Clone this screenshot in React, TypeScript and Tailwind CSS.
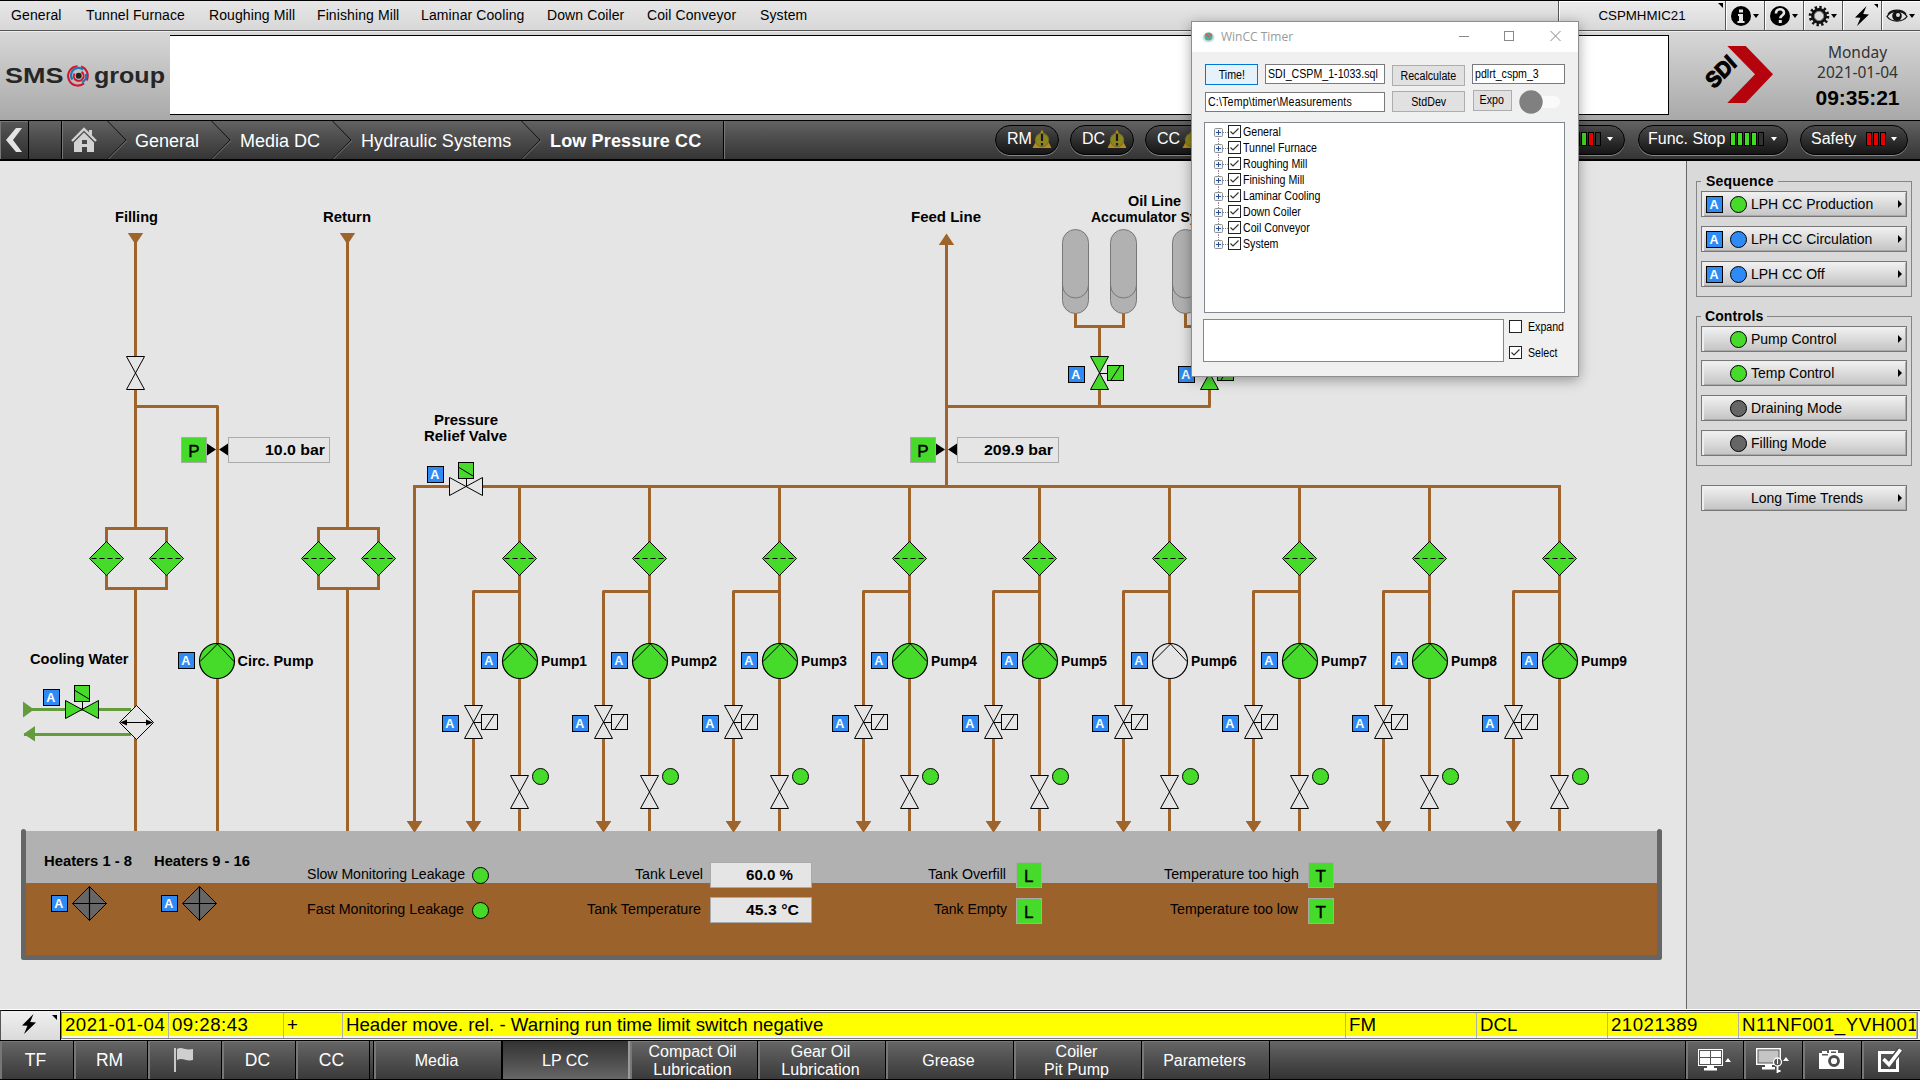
import React from "react";

const GREEN = "#46da2b";
const PIPE = "#9f642c";
const BG = "#e5e5e5";

/* ---------- process symbols ---------- */

type LabelProps = {
  x: number;
  y: number;
  w?: number;
  children: string;
  size?: number;
  bold?: boolean;
};

function Label({ x, y, w, children, size = 14, bold = true }: LabelProps) {
  return (
    <text x={x} y={y} fontSize={size} fontWeight={bold ? 700 : 400} textLength={w} lengthAdjust="spacingAndGlyphs" fill="#000">
      {children}
    </text>
  );
}

function Pipe({ d, color = PIPE }: { d: string; color?: string }) {
  return <path d={d} fill="none" stroke={color} strokeWidth={3} strokeLinejoin="round" />;
}

function AutoMark({ x, y }: { x: number; y: number }) {
  return (
    <g>
      <rect x={x + 0.5} y={y + 0.5} width={16} height={16} fill="#2e8bf5" stroke="#000" />
      <text x={x + 7.8} y={y + 12.8} fontSize={12.5} fontWeight={700} fill="#fff" textAnchor="middle">
        A
      </text>
    </g>
  );
}

function Filter({ x, y }: { x: number; y: number }) {
  return (
    <g stroke="#000">
      <path d={`M${x} ${y - 17}L${x + 17} ${y}L${x} ${y + 17}L${x - 17} ${y}Z`} fill={GREEN} />
      <path d={`M${x - 15} ${y}H${x + 15}`} strokeDasharray="5 3" />
    </g>
  );
}

function Pump({ x, y, fill = GREEN }: { x: number; y: number; fill?: string }) {
  return (
    <g stroke="#000">
      <circle cx={x} cy={y} r={17.5} fill={fill} strokeWidth={1.2} />
      <path d={`M${x - 17} ${y + 0.5}L${x + 0.5} ${y - 17}L${x + 17} ${y + 0.5}`} fill="none" />
    </g>
  );
}

function ValveV({ x, y, fill = BG }: { x: number; y: number; fill?: string }) {
  return (
    <path
      d={`M${x - 9} ${y - 16.5}H${x + 9}L${x - 9} ${y + 16.5}H${x + 9}Z`}
      fill={fill}
      stroke="#000"
    />
  );
}

function SolenoidV({ x, y, fill = BG }: { x: number; y: number; fill?: string }) {
  return (
    <g stroke="#000">
      <ValveV x={x} y={y} fill={fill} />
      <path d={`M${x} ${y + 0.5}h8`} />
      <rect x={x + 8} y={y - 7.5} width={16} height={15} fill={fill} />
      <path d={`M${x + 11.5} ${y + 7}L${x + 20.5} ${y - 7}`} />
    </g>
  );
}

function SolenoidH({ x, y, fill = BG }: { x: number; y: number; fill?: string }) {
  return (
    <g stroke="#000">
      <path d={`M${x - 16.5} ${y - 9}V${y + 9}L${x + 16.5} ${y - 9}V${y + 9}Z`} fill={fill} />
      <path d={`M${x + 0.5} ${y - 8}V${y}`} />
      <rect x={x - 7.5} y={y - 24} width={15} height={16} fill={GREEN} />
      <path d={`M${x - 7} ${y - 19}L${x + 7} ${y - 10.5}`} />
    </g>
  );
}

function ArrowDown({ x, y }: { x: number; y: number }) {
  return <path d={`M${x - 7.7} ${y}h15.4L${x} ${y + 11.5}Z`} fill={PIPE} />;
}

function Sensor({ x, y, letter }: { x: number; y: number; letter: string }) {
  return (
    <g>
      <rect x={x + 0.5} y={y + 0.5} width={25} height={25} fill={GREEN} stroke="#aaa" />
      <text x={x + 12.8} y={y + 19.8} fontSize={17} textAnchor="middle" fill="#000" stroke="#000" strokeWidth={0.4}>
        {letter}
      </text>
    </g>
  );
}

function ValueBox({ x, y }: { x: number; y: number }) {
  return <rect x={x + 0.5} y={y + 0.5} width={101} height={25} fill={BG} stroke="#aaa" />;
}

function PressureGauge({ x, value, vx, vw }: { x: number; value: string; vx: number; vw: number }) {
  return (
    <g>
      <Sensor x={x - 36.5} y={437} letter="P" />
      <path d={`M${x - 10.5} 443.5l9 6l-9 6ZM${x + 10.5} 443.5l-9 6l9 6Z`} fill="#000" />
      <ValueBox x={x + 10.5} y={437} />
      <Label x={vx} y={455} w={vw}>{value}</Label>
    </g>
  );
}

function Accumulator({ x }: { x: number }) {
  return (
    <g stroke="#777" fill="#b1b1b1">
      <rect x={x - 13} y={229.5} width={26} height={84} rx={13} />
      <path d={`M${x - 13} 285a13 13 0 0 0 26 0`} fill="none" />
    </g>
  );
}

function Heater({ x, y }: { x: number; y: number }) {
  return (
    <g stroke="#000">
      <path d={`M${x} ${y - 17}L${x + 17} ${y}L${x} ${y + 17}L${x - 17} ${y}Z`} fill="#666" />
      <path d={`M${x - 17} ${y}h34M${x} ${y - 17}v34`} strokeWidth={1.2} />
    </g>
  );
}

function PumpLine({ n }: { n: number }) {
  const x = 519.5 + 130 * (n - 1);
  const r = x - 46;
  return (
    <g>
      <Pipe d={`M${x} 486.5V644M${x} 678V775M${x} 809V831`} />
      <Pipe d={`M${x} 591.5H${r}V705M${r} 739V824`} />
      <Filter x={x} y={558.5} />
      <Pump x={x + 0.5} y={661} fill={n === 6 ? BG : GREEN} />
      <AutoMark x={x - 38.5} y={652} />
      <Label x={x + 21.5} y={666} w={46}>{`Pump${n}`}</Label>
      <SolenoidV x={r} y={722} />
      <AutoMark x={r - 31.5} y={715} />
      <ValveV x={x} y={792} />
      <circle cx={x + 21} cy={776.5} r={8} fill={GREEN} stroke="#000" />
      <ArrowDown x={r} y={821} />
    </g>
  );
}

function FilterPair({ x }: { x: number }) {
  return (
    <g>
      <path
        d={`M${x - 29} 528.5H${x + 31}V588.5H${x - 29}Z`}
        fill="none"
        stroke={PIPE}
        strokeWidth={3}
      />
      <Filter x={x - 29} y={558.5} />
      <Filter x={x + 31} y={558.5} />
    </g>
  );
}

function Diagram() {
  return (
    <svg
      width={1686}
      height={848}
      viewBox="0 161 1686 848"
      className="block shrink-0 bg-[#e5e5e5] font-['Liberation_Sans',Arial,sans-serif]"
    >
      {/* filling line */}
      <Label x={115} y={222} w={43}>Filling</Label>
      <Pipe d="M135.5 240V356M135.5 389V528M135.5 588V831M135.5 406.5H217.5V644M217.5 678V831" />
      <ArrowDown x={135.5} y={233} />
      <ValveV x={135.5} y={373} />
      <FilterPair x={135.5} />
      <PressureGauge x={217.5} value="10.0 bar" vx={265} vw={60} />
      <Pump x={217} y={661} />
      <AutoMark x={178} y={652} />
      <Label x={237.5} y={666} w={76}>Circ. Pump</Label>

      {/* return line */}
      <Label x={323} y={222} w={48}>Return</Label>
      <Pipe d="M347.5 240V528M347.5 588V831" />
      <ArrowDown x={347.5} y={233} />
      <FilterPair x={347.5} />

      {/* cooling water */}
      <Label x={30} y={664} w={98.5}>Cooling Water</Label>
      <Pipe color="#649b3c" d="M24 709.5H131M24 734.5H131" />
      <path d="M23 701.5l11 8l-11 8ZM23.5 734l11.5-8v15.500Z" fill="#649b3c" />
      <SolenoidH x={82} y={709.5} fill={GREEN} />
      <AutoMark x={43} y={689} />
      <path d="M136.500 705.5l17 17l-17 17l-17-17Z" fill={BG} stroke="#000" />
      <path d="M122 722.5h29" stroke="#000" />
      <path d="M120 722.500l7-3v6ZM153 722.500l-7-3v6Z" fill="#000" />

      {/* pressure header */}
      <Label x={434} y={425} w={64}>Pressure</Label>
      <Label x={424} y={441} w={83}>Relief Valve</Label>
      <path d="M414.5 824V486.5H1559.5V500" fill="none" stroke={PIPE} strokeWidth={3} />
      <ArrowDown x={414.5} y={821} />
      <rect x={450} y={480} width={32} height={12} fill={BG} />
      <SolenoidH x={466} y={486.5} />
      <AutoMark x={427} y={466} />

      {[1, 2, 3, 4, 5, 6, 7, 8, 9].map((n) => (
        <PumpLine key={n} n={n} />
      ))}

      {/* feed line */}
      <Label x={911} y={222} w={70}>Feed Line</Label>
      <Pipe d="M946.5 240V486M946.5 406.5H1209.5V389M1099.5 389V406" />
      <path d="M938.800 245h15.400L946.500 233.500Z" fill={PIPE} />
      <PressureGauge x={946.5} value="209.9 bar" vx={984} vw={69} />

      {/* accumulators */}
      <Label x={1128} y={206} w={53}>Oil Line</Label>
      <Label x={1091} y={222}>Accumulator System</Label>
      <path
        d="M1075.5 313V326.500H1123.500V313M1185.500 313V326.500H1233.500V313M1099.500 326V356M1209.500 326V356"
        fill="none"
        stroke={PIPE}
        strokeWidth={3}
      />
      <Accumulator x={1075.5} />
      <Accumulator x={1123.5} />
      <Accumulator x={1185.5} />
      <Accumulator x={1233.5} />
      <SolenoidV x={1099.5} y={373} fill={GREEN} />
      <AutoMark x={1068} y={366} />
      <SolenoidV x={1209.5} y={373} fill={GREEN} />
      <AutoMark x={1178} y={366} />

      {/* tank */}
      <rect x={26} y={831} width={1631} height={52} fill="#b1b1b1" />
      <rect x={26} y={883} width={1631} height={73} fill="#9c622b" />
      <path d="M23.500 831.500V957.500H1659.500V831.500" fill="none" stroke="#666" strokeWidth={5} strokeLinecap="round" strokeLinejoin="round" />
      {[414.5, ...[0, 1, 2, 3, 4, 5, 6, 7, 8].map((i) => 473.5 + 130 * i)].map((x) => (
        <ArrowDown key={x} x={x} y={821} />
      ))}
      <Label x={44} y={866} w={88}>Heaters 1 - 8</Label>
      <Label x={154} y={866} w={96}>Heaters 9 - 16</Label>
      <AutoMark x={51} y={895} />
      <AutoMark x={161} y={895} />
      <Heater x={89.5} y={903.5} />
      <Heater x={199.5} y={903.5} />

      <Label bold={false} x={307} y={879} w={158}>Slow Monitoring Leakage</Label>
      <Label bold={false} x={307} y={914} w={157}>Fast Monitoring Leakage</Label>
      <circle cx={480.500} cy={875.500} r={8} fill={GREEN} stroke="#000" />
      <circle cx={480.500} cy={910.500} r={8} fill={GREEN} stroke="#000" />

      <Label bold={false} x={635} y={879} w={68}>Tank Level</Label>
      <Label bold={false} x={587} y={914} w={114}>Tank Temperature</Label>
      <ValueBox x={710} y={862} />
      <ValueBox x={710} y={897} />
      <Label x={746} y={880} w={47}>60.0 %</Label>
      <Label x={746} y={915} w={53}>45.3 °C</Label>

      <Label bold={false} x={928} y={879} w={78}>Tank Overfill</Label>
      <Label bold={false} x={934} y={914} w={73}>Tank Empty</Label>
      <Sensor x={1016} y={862} letter="L" />
      <Sensor x={1016} y={898} letter="L" />

      <Label bold={false} x={1164} y={879} w={135}>Temperature too high</Label>
      <Label bold={false} x={1170} y={914} w={128}>Temperature too low</Label>
      <Sensor x={1308} y={862} letter="T" />
      <Sensor x={1308} y={898} letter="T" />
    </svg>
  );
}

/* ---------- top bars ---------- */

function Bolt({ className }: { className?: string }) {
  return (
    <svg width="18" height="22" viewBox="0 0 18 22" className={className}>
      <path d="M13.500 1L2 12.500l5.500.3L4 21L16 9.500l-5.800-.6Z" fill="#000" />
    </svg>
  );
}

function Caret({ className }: { className?: string }) {
  return (
    <svg width="6" height="4" viewBox="0 0 6 4" className={className}>
      <path d="M0 0h6L3 4Z" fill="currentColor" />
    </svg>
  );
}

const menu: [string, string][] = [
  ["General", "w-[75px]"],
  ["Tunnel Furnace", "w-[123px]"],
  ["Roughing Mill", "w-[108px]"],
  ["Finishing Mill", "w-[104px]"],
  ["Laminar Cooling", "w-[126px]"],
  ["Down Coiler", "w-[100px]"],
  ["Coil Conveyor", "w-[113px]"],
  ["System", "w-[60px]"],
];

const toolCell =
  "relative flex h-full items-center border-l border-[#555] bg-linear-to-b from-[#ececec] to-[#d8d8d8] shadow-[inset_1px_1px_0_#fff]";

function MenuBar() {
  return (
    <div className="flex h-[31px] shrink-0 border-t border-b border-t-black border-b-[#555] bg-linear-to-b from-[#e6e6e6] to-[#d8d8d8] text-[14px]">
      <div className="flex items-center pl-[11px] pb-px">
        {menu.map(([t, w]) => (
          <span key={t} className={`${w} whitespace-nowrap tracking-[0.1px]`}>
            {t}
          </span>
        ))}
      </div>
      <div className="ml-auto flex">
        <div className={`${toolCell} w-[167px] justify-center pt-px text-[13.300px]`}>
          CSPMHMIC21
          <svg className="absolute top-[2px] right-[2px]" width="5" height="5" viewBox="0 0 5 5"><path d="M0 0h5v5Z" /></svg>
        </div>
        <div className={`${toolCell} w-[39px] pl-[4px]`}>
          <svg width="22" height="22" viewBox="0 0 22 22">
            <circle cx="11" cy="11" r="10" />
            <path d="M9 4.500h4v3H9ZM8 9h5v7h1.500v2h-7v-2H9v-5H8Z" fill="#e6e6e6" />
          </svg>
          <Caret className="ml-[1px]" />
        </div>
        <div className={`${toolCell} w-[39px] pl-[4px]`}>
          <svg width="22" height="22" viewBox="0 0 22 22">
            <circle cx="11" cy="11" r="10" />
            <path d="M7 8.500c0-5.500 8-5.500 8-.8c0 2.800-3.700 2.800-3.700 5.600" fill="none" stroke="#e6e6e6" strokeWidth="2.600" />
            <rect x="9.800" y="15" width="3" height="3" fill="#e6e6e6" />
          </svg>
          <Caret className="ml-[1px]" />
        </div>
        <div className={`${toolCell} w-[39px] pl-[4px]`}>
          <svg width="22" height="22" viewBox="0 0 22 22">
            <circle cx="11" cy="11" r="8.700" fill="none" stroke="#111" strokeWidth="3.200" strokeDasharray="2.300 2.260" />
            <circle cx="11" cy="11" r="6.300" fill="#ddd" stroke="#111" strokeWidth="3.200" />
            <circle cx="11" cy="11" r="4.700" fill="none" stroke="#888" strokeWidth="1" />
          </svg>
          <Caret className="ml-[1px]" />
        </div>
        <div className={`${toolCell} w-[39px] pl-[10px]`}>
          <Bolt />
          <svg className="absolute top-[3px] right-[3px]" width="4" height="4" viewBox="0 0 4 4"><path d="M0 0h4v4Z" /></svg>
        </div>
        <div className={`${toolCell} w-[39px] pl-[4px]`}>
          <svg width="22" height="16" viewBox="0 0 22 16">
            <path d="M1 8.500C5 1.500 17 1.500 21 8.500C17 14.500 5 14.500 1 8.500Z" fill="none" stroke="#111" strokeWidth="1.300" />
            <path d="M2 6C6 .8 16 .8 20 6" fill="none" stroke="#111" strokeWidth="1.200" />
            <circle cx="11" cy="8" r="4.800" fill="#111" />
            <circle cx="12" cy="7" r="2" fill="#ddd" />
          </svg>
          <Caret className="ml-[1px]" />
        </div>
      </div>
    </div>
  );
}

function Header() {
  return (
    <div className="flex h-[89px] shrink-0 border-t border-[#eee] bg-linear-to-b from-[#d7d7d7] to-[#a9a9a9]">
      <svg width="170" height="88" viewBox="0 32 170 88" className="shrink-0 font-['Liberation_Sans',Arial,sans-serif]">
        <text x="5" y="83" fontSize="21.500" fontWeight="700" fill="#262626" textLength="58.500" lengthAdjust="spacingAndGlyphs">SMS</text>
        <text x="94" y="83" fontSize="21.500" fontWeight="700" fill="#262626" textLength="71" lengthAdjust="spacingAndGlyphs">group</text>
        <g fill="none" strokeWidth="2.100">
          <path d="M77.500 66.200a9.700 9.700 0 1 0 6.500 17.200M81 66.500a9.700 9.700 0 0 1 5.500 14" stroke="#d4142a" />
          <path d="M72.500 79.500a7.300 7.300 0 0 1 10.500-10M86 74a7.300 7.300 0 0 1-4 8.200" stroke="#2277b8" strokeWidth="2.300" />
          <path d="M74.500 73.500a4.900 4.900 0 1 0 7-1.600" stroke="#d4142a" strokeWidth="1.900" />
        </g>
        <circle cx="78.700" cy="75.700" r="3" fill="#222" />
      </svg>
      <div className="mt-[3px] h-[80px] w-[1499px] border-y border-r border-black bg-white" />
      <svg width="130" height="88" viewBox="1669 32 130 88" className="shrink-0 font-['Liberation_Sans',Arial,sans-serif]">
        <path d="M1727.300 46H1745.700L1773 74.300L1745.700 103H1727.300L1755 74.300Z" fill="#b5030d" />
        <text
          transform="translate(1714 89.500) rotate(-46) skewX(-4)"
          fontSize="22"
          fontWeight="700"
          fill="#000"
          stroke="#000"
          strokeWidth="1.100"
          textLength="34"
          lengthAdjust="spacingAndGlyphs"
        >
          SDI
        </text>
      </svg>
      <div className="flex w-[117px] flex-col items-center pt-[10px] text-[#333]">
        <span className="font-['Noto_Sans',sans-serif] text-[15.500px] leading-[20px]">Monday</span>
        <span className="font-['Noto_Sans',sans-serif] text-[15.500px] leading-[20px]">2021-01-04</span>
        <span className="mt-[4px] text-[21px] leading-[24px] font-bold text-black">09:35:21</span>
      </div>
    </div>
  );
}

function Chevron() {
  return (
    <svg width="20" height="38" viewBox="0 0 20 38" className="shrink-0">
      <path d="M.5 0L19 19L.5 38" fill="none" stroke="#111" strokeWidth="1" />
      <path d="M1.500 38L20 19.500" fill="none" stroke="#777" strokeWidth="1" />
    </svg>
  );
}

function Warn() {
  return (
    <svg width="20" height="20" viewBox="0 0 20 20">
      <path d="M10 .5L19.500 19H.5Z" fill="#b88a1c" />
      <circle cx="10" cy="11" r="6.800" fill="#8c861e" stroke="#6d6a2a" />
      <path d="M10 5v7M10 14v2.500" stroke="#1a1a1a" strokeWidth="2.200" />
    </svg>
  );
}

const pill =
  "mt-[4px] flex h-[30px] items-center rounded-full border border-black bg-linear-to-b from-[#4a4a4a] to-[#161616] pb-[2px] text-[16px] text-white shadow-[0_1px_0_#888]";

function Bars({ colors }: { colors: string[] }) {
  const cls: Record<string, string> = {
    g: "bg-[#3fdc22]",
    r: "bg-[#e80000]",
    n: "bg-[#333]",
  };
  return (
    <div className="flex gap-px">
      {colors.map((c, i) => (
        <div key={i} className={`h-[14px] w-[6px] border border-black ${cls[c]}`} />
      ))}
    </div>
  );
}

function Crumbs() {
  return (
    <div className="flex h-[41px] shrink-0 border-t border-b-2 border-black bg-linear-to-b from-[#626262] to-[#353535] text-[18px] text-white">
      <div className="flex w-[29px] items-center justify-center border-r border-black bg-black/10 pr-[1px] shadow-[inset_1px_1px_0_#777]">
        <svg width="18" height="26" viewBox="0 0 18 26"><path d="M11 1H17L8 13L17 25H11L1 13Z" fill="#e4e4e4" /></svg>
      </div>
      <div className="w-[33px] border-r border-black" />
      <div className="flex w-[45px] items-center pl-[9px] shadow-[inset_1px_0_0_#777]">
        <svg width="26" height="26" viewBox="0 0 26 26">
          <path d="M1 14L13 2L25 14" fill="none" stroke="#d2d2d2" strokeWidth="2.400" />
          <path d="M18 3h3v6l-3-3Z" fill="#d2d2d2" />
          <path d="M3 15.500L13 5.500L23 15.500V25H16V20H11V25H3ZM11 13v4h5v-4Z" fill="#d2d2d2" fillRule="evenodd" />
        </svg>
      </div>
      <Chevron />
      <div className="flex w-[84px] items-center pt-[2px] pl-[8px]">General</div>
      <Chevron />
      <div className="flex w-[101px] items-center pt-[2px] pl-[9px]">Media DC</div>
      <Chevron />
      <div className="flex w-[169px] items-center pt-[2px] pl-[9px] tracking-[0.08px] whitespace-nowrap">Hydraulic Systems</div>
      <Chevron />
      <div className="flex w-[183px] items-center border-r border-black pt-[2px] pl-[9px] font-bold tracking-[0.15px]">Low Pressure CC</div>
      <div className="flex flex-1 pl-[271px] shadow-[inset_1px_0_0_#777]">
        <div className={`${pill} w-[64px] pl-[11px]`}>RM<Warn /></div>
        <div className={`${pill} ml-[11px] w-[64px] pl-[11px]`}>DC<span className="w-[2px]" /><Warn /></div>
        <div className={`${pill} ml-[11px] w-[64px] pl-[11px]`}>CC<span className="w-[2px]" /><Warn /></div>
        <div className={`${pill} ml-auto w-[150px] pl-[91px]`}>
          <Bars colors={["g", "r", "g", "r", "n"]} />
          <Caret className="ml-[6px]" />
        </div>
        <div className={`${pill} ml-[13px] w-[150px] pl-[9px]`}>
          <span className="w-[82px] whitespace-nowrap">Func. Stop</span>
          <Bars colors={["g", "g", "g", "g", "n"]} />
          <Caret className="ml-[7px]" />
        </div>
        <div className={`${pill} mt-[3px] mr-[12px] ml-[12px] w-[108px] pl-[10px]`}>
          <span className="w-[55px]">Safety</span>
          <Bars colors={["r", "r", "r"]} />
          <Caret className="ml-[5px]" />
        </div>
      </div>
    </div>
  );
}

/* ---------- side panel ---------- */

type SideItem = { text: string; auto?: boolean; dot?: "green" | "blue" | "gray"; arrow?: boolean; mt: string };

const dotClass = { green: "bg-[#46da2b]", blue: "bg-[#2e8bf5]", gray: "bg-[#666]" };

function SideButton({ text, auto, dot, arrow, mt }: SideItem) {
  return (
    <div
      className={`${mt} flex h-[26px] w-[206px] items-center border border-[#777] bg-linear-to-b from-[#f2f2f2] to-[#c4c4c4] pl-[4px] text-[14px] shadow-[inset_2px_1px_0_#eee,inset_-1px_-1px_0_#aaa]`}
    >
      {auto ? (
        <span className="h-[17px] w-[17px] border border-black bg-[#2e8bf5] pr-px text-center text-[12.500px] leading-[16px] font-bold text-white">A</span>
      ) : (
        <span className="w-[17px]" />
      )}
      {dot ? (
        <span className={`ml-[7px] h-[17px] w-[17px] rounded-full border border-black ${dotClass[dot]}`} />
      ) : (
        <span className="ml-[7px] w-[17px]" />
      )}
      <span className="ml-[4px] whitespace-nowrap">{text}</span>
      {arrow && (
        <svg className="mr-[4px] mb-px ml-auto" width="4" height="8" viewBox="0 0 4 8"><path d="M0 0L4 4L0 8Z" /></svg>
      )}
    </div>
  );
}

function SidePanel() {
  return (
    <div className="flex flex-1 flex-col border-l border-[#666] bg-[#d9d9d9] pl-[9px]">
      <div className="relative mt-[20px] h-[116px] w-[216px] shrink-0 border border-[#858585] pl-[4px]">
        <span className="absolute -top-[10px] left-[4px] bg-[#d9d9d9] pr-[4px] pl-[5px] text-[14px] leading-[18px] font-bold tracking-[0.200px]">Sequence</span>
        <SideButton mt="mt-[9px]" text="LPH CC Production" auto dot="green" arrow />
        <SideButton mt="mt-[9px]" text="LPH CC Circulation" auto dot="blue" arrow />
        <SideButton mt="mt-[9px]" text="LPH CC Off" auto dot="blue" arrow />
      </div>
      <div className="relative mt-[19px] h-[150px] w-[216px] shrink-0 border border-[#858585] pl-[4px]">
        <span className="absolute -top-[10px] left-[4px] bg-[#d9d9d9] pr-[4px] pl-[4px] text-[14px] leading-[18px] font-bold tracking-[0.100px]">Controls</span>
        <SideButton mt="mt-[9px]" text="Pump Control" dot="green" arrow />
        <SideButton mt="mt-[8px]" text="Temp Control" dot="green" arrow />
        <SideButton mt="mt-[9px]" text="Draining Mode" dot="gray" />
        <SideButton mt="mt-[9px]" text="Filling Mode" dot="gray" />
      </div>
      <div className="pl-[5px]">
        <SideButton mt="mt-[19px]" text="Long Time Trends" arrow />
      </div>
    </div>
  );
}

/* ---------- bottom bars ---------- */

const alarmCells: [string, string][] = [
  ["2021-01-04", "w-[107px] tracking-[0.480px]"],
  ["09:28:43", "w-[115px] tracking-[0.480px]"],
  ["+", "w-[59px]"],
  ["Header move. rel. - Warning run time limit switch negative", "w-[1003px]"],
  ["FM", "w-[131px]"],
  ["DCL", "w-[131px]"],
  ["21021389", "w-[131px] tracking-[0.480px]"],
  ["N11NF001_YVH001_", "w-[178px] tracking-[0.500px]"],
];

function AlarmRow() {
  return (
    <div className="flex h-[31px] shrink-0 border-t border-white bg-[#f4f4f4]">
      <div className="relative flex w-[61px] items-center justify-center border-t border-l border-t-black border-l-[#555] border-r border-r-black bg-linear-to-b from-[#f0f0f0] to-[#dadada]">
        <Bolt className="-ml-[3px] -mt-[3px]" />
        <svg className="absolute top-[4px] right-[3px]" width="5" height="5" viewBox="0 0 5 5"><path d="M0 0h5v5Z" /></svg>
      </div>
      <div className="flex-1 border-t border-black pt-[1px] pr-[2px]">
        <div className="flex h-[27px] overflow-hidden border border-[#808080] bg-[#f4f4f4] text-[18.670px]">
          {alarmCells.map(([t, w]) => (
            <div key={t} className={`${w} shrink-0 overflow-hidden border-r border-[#b0b0b0] whitespace-nowrap`}>
              <div className="h-[23px] bg-[#ffff00] pl-[3px] leading-[23px]">{t}</div>
            </div>
          ))}
        </div>
      </div>
    </div>
  );
}

const navBtn =
  "flex h-full shrink-0 items-center justify-center border-r border-black bg-linear-to-b from-[#666] to-[#3a3a3a] pr-[2px] text-center shadow-[inset_2px_1px_0_#777]";

const pages = ["Media", "LP CC", "Compact Oil\nLubrication", "Gear Oil\nLubrication", "Grease", "Coiler\nPit Pump", "Parameters"];

function BottomBar() {
  return (
    <div className="flex h-[40px] shrink-0 border-t border-b border-black bg-linear-to-b from-[#666] to-[#333] text-white">
      <div className={`${navBtn} w-[74px] text-[17.500px]`}>TF</div>
      <div className={`${navBtn} w-[74px] text-[17.500px]`}>RM</div>
      <div className={`${navBtn} w-[74px]`}>
        <svg width="20" height="25" viewBox="0 0 20 25" className="mb-[2px]">
          <path d="M1 1v24" stroke="#c9c9c9" strokeWidth="2" />
          <path d="M3 2C8-1 11 4 19 2V13C12 15 9 10 3 13Z" fill="#cfcfcf" />
        </svg>
      </div>
      <div className={`${navBtn} w-[74px] text-[17.500px]`}>DC</div>
      <div className={`${navBtn} w-[74px] text-[17.500px]`}>CC</div>
      <div className="w-[4px] shrink-0 border-r border-black" />
      {pages.map((p) => (
        <div
          key={p}
          className={
            p === "LP CC"
              ? "flex w-[128px] shrink-0 items-center justify-center border-r-2 border-l border-black border-r-[#999] bg-linear-to-b from-[#333] to-[#666] pt-[2px] text-[16px]"
              : `${navBtn} w-[128px] pt-[2px] text-[16px] leading-[18px] whitespace-pre-line`
          }
        >
          {p}
        </div>
      ))}
      <div className="flex-1" />
      <div className={`${navBtn} w-[59px] border-l`}>
        <svg width="34" height="24" viewBox="0 0 34 24">
          <rect x="2" y="2" width="23" height="15" fill="#fff" stroke="#fff" strokeWidth="2" />
          <rect x="2.500" y="2.500" width="22" height="14" fill="none" stroke="#555" />
          <path d="M3 9.500h21M13.500 3v13" stroke="#555" strokeWidth="1" />
          <path d="M10 18h7v2h3v2.500H7V20h3Z" fill="#fff" />
          <path d="M28 14h6l-3-4Z" fill="#fff" />
        </svg>
      </div>
      <div className={`${navBtn} w-[59px]`}>
        <svg width="34" height="26" viewBox="0 0 34 26">
          <rect x="2" y="2" width="23" height="15" fill="#c4c4c4" stroke="#fff" strokeWidth="2" />
          <rect x="3" y="3" width="21" height="13" fill="none" stroke="#555" />
          <path d="M10 18h7v2h3v2.500H7V20h3Z" fill="#fff" />
          <circle cx="22.500" cy="15" r="4" fill="#555" stroke="#fff" strokeWidth="1.300" />
          <path d="M22.500 12v5" stroke="#fff" />
          <path d="M22.500 19v7M22.500 24h3" stroke="#fff" strokeWidth="1.800" />
          <path d="M28 14h6l-3-4Z" fill="#fff" />
        </svg>
      </div>
      <div className={`${navBtn} w-[59px]`}>
        <svg width="25" height="21" viewBox="0 0 25 21" className="mb-[2px]">
          <path d="M0 4h3V2h5v2h2V1h9v3h6v16H0Z" fill="#fff" />
          <rect x="12" y="2.500" width="5" height="1.500" fill="#555" />
          <rect x="3" y="5" width="6" height="1.500" fill="#555" />
          <circle cx="15" cy="12" r="4.500" fill="#fff" stroke="#4d4d4d" strokeWidth="2.800" />
        </svg>
      </div>
      <div className={`${navBtn} w-[58px] border-r-0`}>
        <svg width="26" height="26" viewBox="0 0 26 26">
          <rect x="2.500" y="5.500" width="18" height="18" fill="none" stroke="#fff" strokeWidth="3" />
          <path d="M6.500 12L12 17.500L23.500 2.500" fill="none" stroke="#4d4d4d" strokeWidth="6.500" />
          <path d="M6.500 12L12 17.500L23.500 2.500" fill="none" stroke="#fff" strokeWidth="3.600" />
        </svg>
      </div>
    </div>
  );
}

/* ---------- timer window ---------- */

function Slim({ children }: { children: string }) {
  return <span className="inline-block scale-x-[0.89] whitespace-nowrap text-[12px]">{children}</span>;
}

function SlimLeft({ children }: { children: string }) {
  return <span className="inline-block origin-left scale-x-[0.885] whitespace-nowrap text-[12px]">{children}</span>;
}

function Check({ on = true }: { on?: boolean }) {
  return (
    <svg width="13" height="13" viewBox="0 0 13 13" className="shrink-0">
      <rect x=".5" y=".5" width="12" height="12" fill="#fff" stroke="#222" />
      {on && <path d="M2.500 6.500L5 9L10.500 3.500" fill="none" stroke="#333" strokeWidth="1.200" />}
    </svg>
  );
}

const tree = ["General", "Tunnel Furnace", "Roughing Mill", "Finishing Mill", "Laminar Cooling", "Down Coiler", "Coil Conveyor", "System"];

const winBtn = "flex h-[21px] items-center justify-center border border-[#adadad] bg-[#e1e1e1]";
const winField = "flex h-[20px] items-center border border-[#7a7a7a] bg-white pl-[2px]";

function TimerWindow() {
  return (
    <div className="absolute top-[21px] left-[1191px] h-[356px] w-[388px] border border-[#8e8e8e] bg-[#f0f0f0] shadow-[0_3px_12px_rgba(0,0,0,0.35)]">
      <div className="flex h-[30px] items-center bg-white pl-[10px] text-[#999]">
        <svg width="13" height="12" viewBox="0 0 13 12">
          <ellipse cx="6.500" cy="6.500" rx="6" ry="5" fill="#c5e6da" />
          <circle cx="6.500" cy="5.500" r="4" fill="#58a6a0" />
          <path d="M4 3l3 3M7 2.500l3 2" stroke="#d0604a" strokeWidth="1.500" />
        </svg>
        <span className="ml-[6px] font-['Open_Sans',sans-serif] text-[12px]">WinCC Timer</span>
        <svg className="mr-[17px] mb-[2px] ml-auto" width="102" height="12" viewBox="0 0 102 12" fill="none" stroke="#888">
          <path d="M0 6.500h10M91.500 1l10 10M101.500 1l-10 10" />
          <rect x="45.500" y="1.500" width="9" height="9" />
        </svg>
      </div>
      <div className="flex pt-[12px] pl-[13px]">
        <div className="flex h-[21px] w-[53px] items-center justify-center border border-[#0078d7] bg-[#e5f1fb]"><Slim>Time!</Slim></div>
        <div className={`${winField} ml-[7px] w-[120px]`}><SlimLeft>SDI_CSPM_1-1033.sql</SlimLeft></div>
        <div className={`${winBtn} mt-[1px] ml-[7px] w-[73px]`}><Slim>Recalculate</Slim></div>
        <div className={`${winField} ml-[7px] w-[93px]`}><SlimLeft>pdlrt_cspm_3</SlimLeft></div>
      </div>
      <div className="mt-[4px] flex h-[24px] pl-[13px]">
        <div className={`${winField} mt-[2px] w-[180px] tracking-[0.200px]`}><SlimLeft>C:\Temp\timer\Measurements</SlimLeft></div>
        <div className={`${winBtn} mt-[1px] ml-[7px] w-[73px]`}><Slim>StdDev</Slim></div>
        <div className={`${winBtn} ml-[8px] w-[39px] pr-px pb-px`}><Slim>Expo</Slim></div>
        <svg className="ml-[7px]" width="42" height="24" viewBox="0 0 42 24">
          <rect x="12" y="6" width="29" height="12" rx="6" fill="#fafafa" />
          <circle cx="12" cy="12" r="11.700" fill="#808080" />
        </svg>
      </div>
      <div className="mt-[8px] ml-[12px] h-[191px] w-[361px] border border-[#828790] bg-white pl-[9px]">
        {tree.map((t, i) => (
          <div key={t} className="flex h-[16px] items-center">
            <svg width="14" height="16" viewBox="0 0 14 16" className="shrink-0">
              <path d={i < tree.length - 1 ? "M4.500 13v3M9 9.500h5" : "M9 9.500h5"} stroke="#888" strokeDasharray="1 1" />
              {i > 0 && <path d="M4.500 0v5" stroke="#888" strokeDasharray="1 1" />}
              <rect x=".5" y="5.500" width="8" height="8" rx="1" fill="#f4f4f4" stroke="#919191" />
              <path d="M2 9.500h5M4.500 7v5" stroke="#2c4fa0" />
            </svg>
            <Check />
            <span className="ml-[2px]"><SlimLeft>{t}</SlimLeft></span>
          </div>
        ))}
      </div>
      <div className="mt-[6px] ml-[11px] flex">
        <div className="h-[43px] w-[301px] border border-[#828790] bg-white" />
        <div className="ml-[5px] flex flex-col pt-[1px]">
          <div className="flex h-[13px] items-center"><Check on={false} /><span className="mb-px ml-[6px]"><SlimLeft>Expand</SlimLeft></span></div>
          <div className="mt-[13px] flex h-[13px] items-center"><Check /><span className="mb-px ml-[6px]"><SlimLeft>Select</SlimLeft></span></div>
        </div>
      </div>
    </div>
  );
}

export default function App() {
  return (
    <div className="relative flex h-[1080px] w-[1920px] flex-col overflow-hidden bg-[#e5e5e5] font-['Liberation_Sans',Arial,sans-serif] text-black">
      <MenuBar />
      <Header />
      <Crumbs />
      <div className="flex h-[848px] shrink-0">
        <Diagram />
        <SidePanel />
      </div>
      <AlarmRow />
      <BottomBar />
      <TimerWindow />
    </div>
  );
}
